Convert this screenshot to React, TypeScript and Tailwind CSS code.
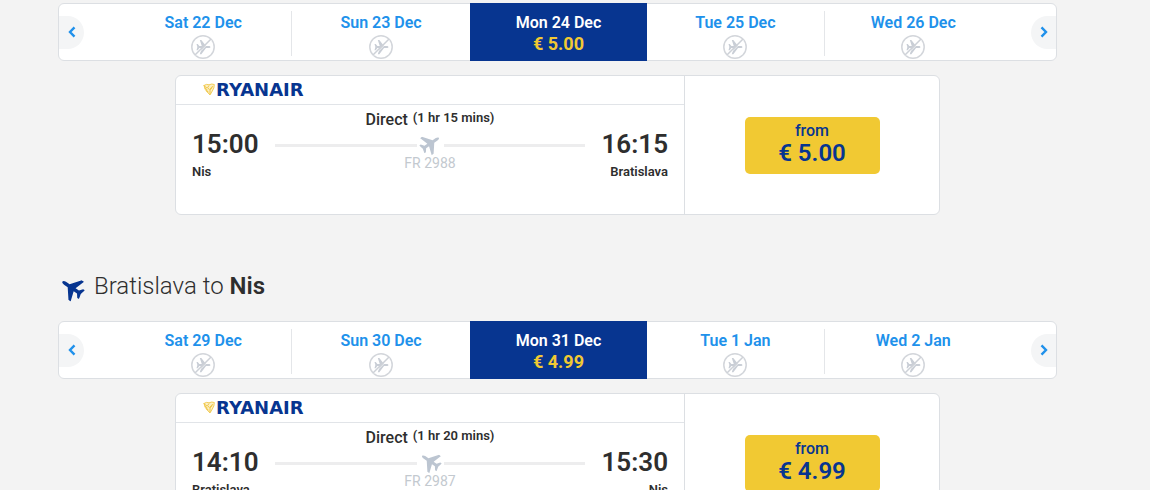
import React from "react";

type Day = { label: string; price?: string };
type Flight = {
  depart: string;
  arrive: string;
  from: string;
  to: string;
  duration: string;
  code: string;
  price: string;
  heading: "east" | "west";
};

const outboundDays: Day[] = [
  { label: "Sat 22 Dec" },
  { label: "Sun 23 Dec" },
  { label: "Mon 24 Dec", price: "€ 5.00" },
  { label: "Tue 25 Dec" },
  { label: "Wed 26 Dec" },
];

const returnDays: Day[] = [
  { label: "Sat 29 Dec" },
  { label: "Sun 30 Dec" },
  { label: "Mon 31 Dec", price: "€ 4.99" },
  { label: "Tue 1 Jan" },
  { label: "Wed 2 Jan" },
];

const outbound: Flight = {
  depart: "15:00",
  arrive: "16:15",
  from: "Nis",
  to: "Bratislava",
  duration: "(1 hr 15 mins)",
  code: "FR 2988",
  price: "€ 5.00",
  heading: "east",
};

const inbound: Flight = {
  depart: "14:10",
  arrive: "15:30",
  from: "Bratislava",
  to: "Nis",
  duration: "(1 hr 20 mins)",
  code: "FR 2987",
  price: "€ 4.99",
  heading: "west",
};

/* Plane seen from above, nose pointing right. */
const PLANE =
  "M24.500 12c0-1-1.300-1.800-3.200-1.800h-4.600L8.500-.5H5.800l3.400 10.700H5L2.200 6.500H0L1.500 12 0 17.500h2.200L5 13.800h4.200L5.800 24.500h2.700l8.200-10.700h4.600c1.900 0 3.200-.8 3.200-1.800z";

function NoFlight() {
  return (
    <svg viewBox="0 0 24 24" className="size-6" aria-hidden="true">
      <circle cx="12" cy="12" r="11.200" fill="none" stroke="#d3d6db" strokeWidth="1.500" />
      <path d={PLANE} fill="#c9ced6" transform="translate(5.500 5.200) scale(.57)" />
      <path d="M5 20.600 20.600 5" stroke="#fff" strokeWidth=".7" />
      <path d="M4.200 19.800 19.800 4.200" stroke="#cdd1d7" strokeWidth="1.500" />
    </svg>
  );
}

function Arrow({ side }: { side: "left" | "right" }) {
  const left = side === "left";
  return (
    <div className={left ? "flex w-14 items-center justify-start" : "flex w-[54px] items-center justify-end"}>
      <button
        type="button"
        aria-label={left ? "Earlier dates" : "Later dates"}
        className={
          left
            ? "flex h-[33px] w-[25px] items-center justify-center rounded-r-full bg-[#f4f5f6]"
            : "flex h-[33px] w-[25px] items-center justify-center rounded-l-full bg-[#f4f5f6]"
        }
      >
        <svg viewBox="0 0 8 12" className="h-3 w-2" fill="none" stroke="#2091eb" strokeWidth="2.400" aria-hidden="true">
          <path d={left ? "M6.500 1.300 2 6l4.500 4.700" : "M1.500 1.300 6 6l-4.500 4.700"} />
        </svg>
      </button>
    </div>
  );
}

function DateBar({ days }: { days: Day[] }) {
  return (
    <div className="flex h-[58px] rounded-md border border-[#dcdfe3] bg-white">
      <Arrow side="left" />
      <div className="grid flex-1 grid-cols-5">
        {days.map((day, i) => (
          <button
            key={day.label}
            type="button"
            className={
              day.price
                ? "-my-px flex flex-col items-center bg-[#073590] pt-[9px] text-white"
                : "flex items-start pt-[7px] text-[#2091eb]"
            }
          >
            {day.price ? (
              <>
                <span className="text-base leading-[21px] font-semibold">{day.label}</span>
                <span className="text-lg leading-[22px] font-bold text-[#f1c933]">{day.price}</span>
              </>
            ) : (
              <span
                className={
                  i === 0 || i === 3
                    ? "flex h-[45px] w-full flex-col items-center border-r border-[#e4e6e9] pt-px"
                    : "flex h-[45px] w-full flex-col items-center pt-px"
                }
              >
                <span className="text-base leading-[22px] font-semibold">{day.label}</span>
                <span className="pt-px">
                  <NoFlight />
                </span>
              </span>
            )}
          </button>
        ))}
      </div>
      <Arrow side="right" />
    </div>
  );
}

function Logo() {
  return (
    <div className="flex items-center gap-px">
      <svg viewBox="0 0 12 13" className="h-[13px] w-3" fill="none" stroke="#eec23a" aria-hidden="true">
        <path d="M1 2.500Q3.500.6 6 1.800 9 .4 11.300 1.500q.2 3.500-2 6.500L7 12Q3.500 8.500 2.300 6.500z" fill="#fcefc4" strokeWidth=".8" />
        <path d="M.5 2.500 4 5M1.500 5l3 2M3 7.500l2.500 1.500M6 2.500 4.500 4.800l2 1.700L9.800 3M7 11V7l2.300-2.500" strokeWidth=".9" />
      </svg>
      <span className="font-['DejaVu_Sans',sans-serif] text-lg leading-5 font-bold text-[#073590]">RYANAIR</span>
    </div>
  );
}

function Plane({ className }: { className: string }) {
  return (
    <svg viewBox="0 -0.5 25 25" className={className} fill="currentColor" aria-hidden="true">
      <path d={PLANE} />
    </svg>
  );
}

function FlightCard({ flight }: { flight: Flight }) {
  return (
    <article className="mx-[117px] mt-3.5 flex h-[140px] rounded-md border border-[#dcdfe3] bg-white">
      <div className="flex flex-2 flex-col border-r border-[#dcdfe3]">
        <header className="flex h-[29px] items-center border-b border-[#e1e4e8] pb-px pl-[27px]">
          <Logo />
        </header>
        <div className="flex justify-between px-4">
          <div className="w-[83px] pt-[23px]">
            <div className="text-[26px] leading-8 font-semibold">{flight.depart}</div>
            <div className="mt-0.5 text-[13px] leading-5 font-semibold">{flight.from}</div>
          </div>
          <div className="flex flex-1 flex-col items-center pt-[3px]">
            <div className="flex gap-[5px]">
              <span className="pt-0.5 text-base leading-5 font-medium">Direct</span>
              <span className="text-[13px] leading-5 font-semibold">{flight.duration}</span>
            </div>
            <div className="mt-1 flex h-[22px] w-full items-center">
              <span className="h-[3px] flex-1 bg-[#ededee]" />
              <Plane
                className={
                  flight.heading === "east"
                    ? "mx-[3px] mb-1 size-[21px] -rotate-34 text-[#bcc5d1]"
                    : "mx-[3px] mb-1 size-[21px] rotate-34 -scale-x-100 text-[#bcc5d1]"
                }
              />
              <span className="h-[3px] flex-1 bg-[#ededee]" />
            </div>
            <div className="text-sm leading-[14px] text-[#c3c9cf]">{flight.code}</div>
          </div>
          <div className="w-[83px] pt-[23px] text-right">
            <div className="text-[26px] leading-8 font-semibold">{flight.arrive}</div>
            <div className="mt-0.5 text-[13px] leading-5 font-semibold">{flight.to}</div>
          </div>
        </div>
      </div>
      <div className="flex flex-1 items-center justify-center">
        <button
          type="button"
          className="flex h-[57px] w-[135px] flex-col items-center rounded-[5px] bg-[#f1c933] pt-1 text-[#073590]"
        >
          <span className="text-base leading-5 font-medium">from</span>
          <span className="text-2xl leading-6 font-semibold">{flight.price}</span>
        </button>
      </div>
    </article>
  );
}

export default function App() {
  return (
    <main className="h-screen overflow-hidden bg-[#f3f3f3] pt-[3px] pr-[93px] pl-[58px] font-[Roboto,sans-serif] text-[#2e2e2e]">
      <section>
        <DateBar days={outboundDays} />
        <FlightCard flight={outbound} />
      </section>
      <section className="mt-[55px]">
        <h2 className="mb-[19px] flex h-8 items-center gap-2.5 pl-0.5 text-2xl leading-8 font-light">
          <Plane className="mt-1 size-6 rotate-34 -scale-x-100 text-[#073590]" />
          <span>
            Bratislava to <strong className="font-semibold">Nis</strong>
          </span>
        </h2>
        <DateBar days={returnDays} />
        <FlightCard flight={inbound} />
      </section>
    </main>
  );
}
